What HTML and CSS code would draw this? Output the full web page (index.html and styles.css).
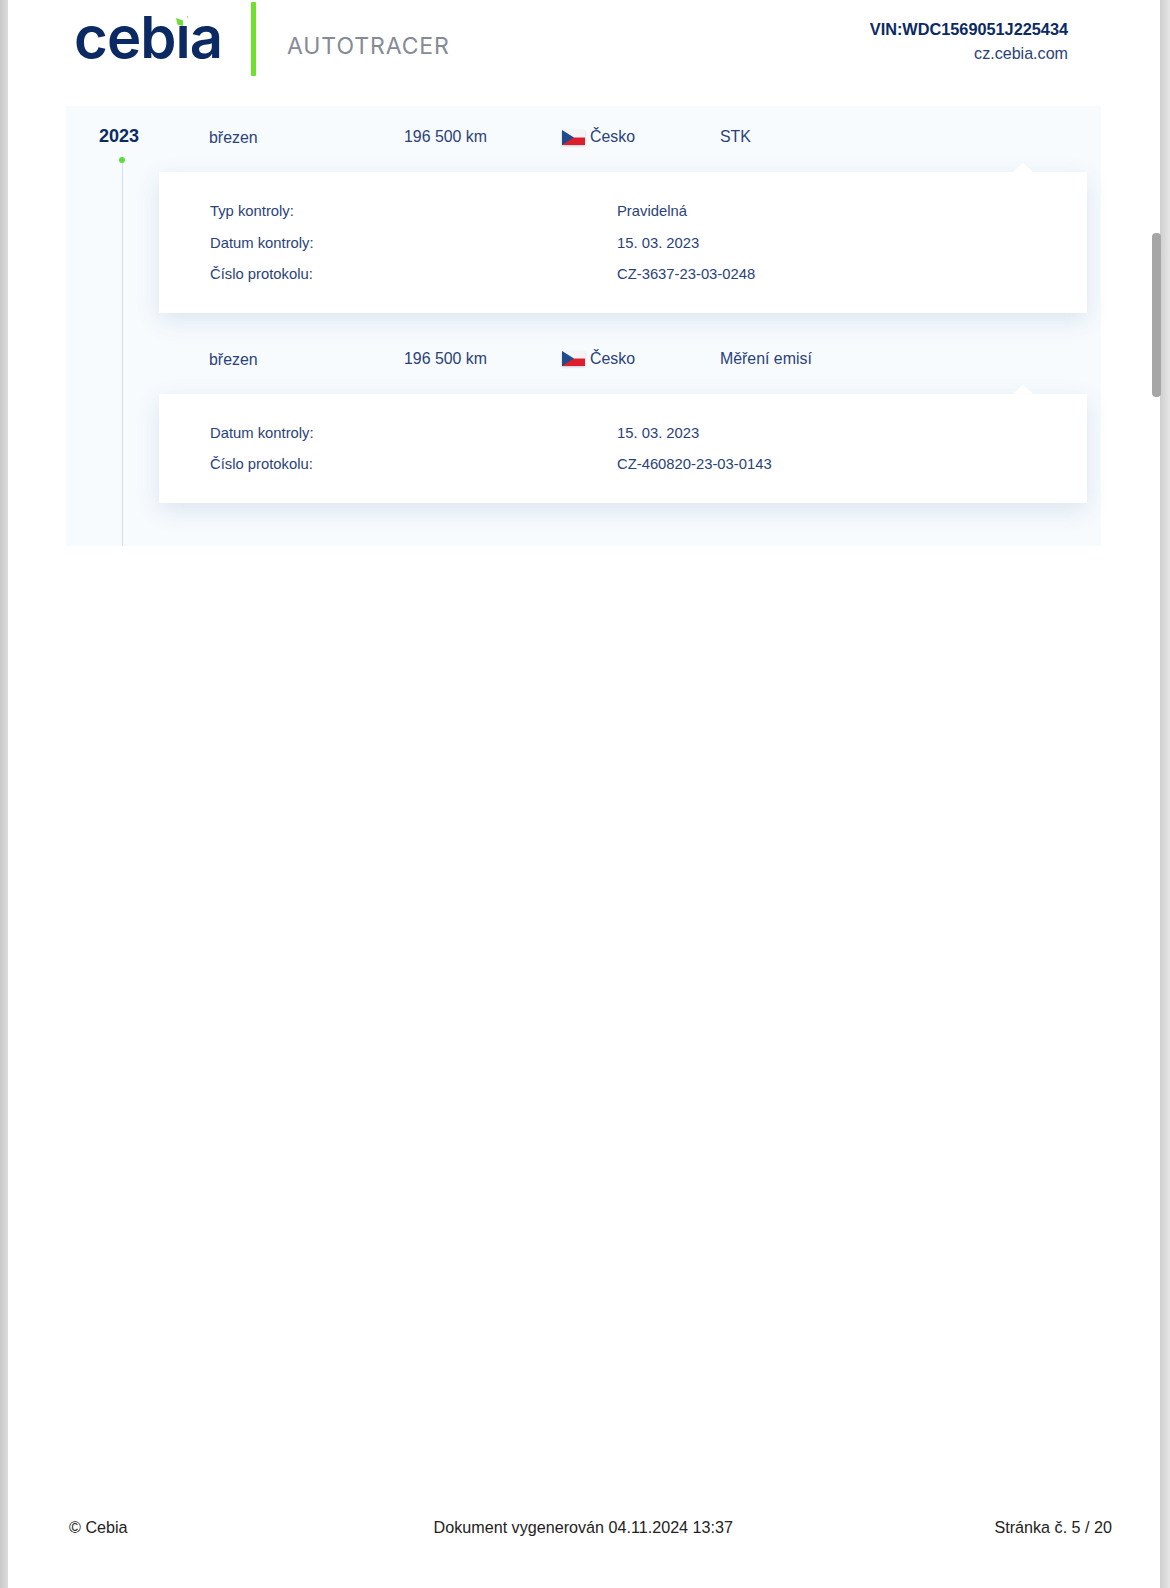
FILE: index.html
```html
<!DOCTYPE html>
<html lang="cs">
<head>
<meta charset="utf-8">
<title>Cebia AutoTracer</title>
<link rel="stylesheet" href="styles.css">
</head>
<body>
<div class="sheet">
  <header class="top">
    <div class="logo"><span class="logo-word">cebia</span><span class="logo-leaf"></span></div>
    <div class="logo-bar"></div>
    <div class="product">AUTOTRACER</div>
    <div class="vin-box">
      <div class="vin">VIN:WDC1569051J225434</div>
      <div class="site">cz.cebia.com</div>
    </div>
  </header>
  <main class="panel">
    <div class="timeline">
      <div class="year">2023</div>
      <div class="dot"></div>
      <div class="line"></div>
    </div>
    <div class="events">
      <div class="event-head">
        <div class="month">březen</div>
        <div>196 500 km</div>
        <div class="country"><svg class="flag" viewBox="0 0 23 15"><rect width="23" height="7.5" fill="#f4f4f6"/><rect y="7.5" width="23" height="7.5" fill="#dc1f2b"/><path d="M0 0L12 7.5L0 15Z" fill="#1f4a8c"/></svg>Česko</div>
        <div>STK</div>
      </div>
      <div class="card">
        <div class="kv"><span>Typ kontroly:</span><span>Pravidelná</span></div>
        <div class="kv"><span>Datum kontroly:</span><span>15. 03. 2023</span></div>
        <div class="kv"><span>Číslo protokolu:</span><span>CZ-3637-23-03-0248</span></div>
      </div>
      <div class="event-head">
        <div class="month">březen</div>
        <div>196 500 km</div>
        <div class="country"><svg class="flag" viewBox="0 0 23 15"><rect width="23" height="7.5" fill="#f4f4f6"/><rect y="7.5" width="23" height="7.5" fill="#dc1f2b"/><path d="M0 0L12 7.5L0 15Z" fill="#1f4a8c"/></svg>Česko</div>
        <div>Měření emisí</div>
      </div>
      <div class="card">
        <div class="kv"><span>Datum kontroly:</span><span>15. 03. 2023</span></div>
        <div class="kv"><span>Číslo protokolu:</span><span>CZ-460820-23-03-0143</span></div>
      </div>
    </div>
  </main>
  <footer class="foot">
    <span>© Cebia</span>
    <span class="foot-mid">Dokument vygenerován 04.11.2024 13:37</span>
    <span class="foot-right">Stránka č. 5 / 20</span>
  </footer>
  <div class="scroll-thumb"></div>
</div>
</body>
</html>
```
FILE: styles.css
```css
* { box-sizing: border-box; }
html, body { margin: 0; height: 100%; }
body {
  width: 1170px;
  height: 1588px;
  overflow: hidden;
  padding: 0 10px 0 8px;
  background: linear-gradient(to right, #c8c8c8 0, #dcdcdc 8px, #fff 8px, #fff 1160px, #cfcfcf 1160px, #e6e6e6 1170px);
  font-family: "Liberation Sans", Arial, sans-serif;
  color: #2a427a;
}
.sheet {
  position: relative;
  height: 1588px;
  background: #fff;
  display: flex;
  flex-direction: column;
}
.top {
  height: 106px;
  flex: none;
  display: flex;
  align-items: flex-start;
}
.logo {
  position: relative;
  margin-left: 66px;
  width: 177px;
  height: 76px;
}
.logo-word {
  font-family: "Inter", sans-serif;
  font-weight: 600;
  font-size: 58px;
  line-height: 74px;
  letter-spacing: -0.9px;
  color: #0b2a63;
  display: block;
}
.logo-leaf {
  position: absolute;
  left: 98px;
  top: 11px;
  width: 15px;
  height: 15px;
  background: #fff;
}
.logo-leaf::after {
  content: "";
  position: absolute;
  left: 4px;
  top: 7px;
  width: 7px;
  height: 8px;
  background: #6fdc3c;
  clip-path: polygon(0 0, 100% 30%, 100% 100%, 20% 80%);
}
.logo-bar {
  width: 5px;
  height: 74px;
  margin-top: 2px;
  background: #6fe02e;
  border-radius: 1px;
}
.product {
  margin: 32px 0 0 31px;
  font-family: "Inter", sans-serif;
  font-weight: 400;
  font-size: 23px;
  line-height: 28px;
  letter-spacing: 0.9px;
  color: #858b94;
}
.vin-box {
  margin: 17px 92px 0 auto;
  text-align: right;
}
.vin {
  font-weight: 700;
  font-size: 16.3px;
  line-height: 24px;
  color: #0b2a63;
}
.site {
  font-size: 16.1px;
  line-height: 24px;
  color: #2a427a;
}
.panel {
  flex: none;
  width: 1035px;
  height: 440px;
  margin-left: 58px;
  background: #f7fbfe;
  display: flex;
}
.timeline {
  width: 93px;
  flex: none;
  display: flex;
  flex-direction: column;
  align-items: flex-start;
}
.year {
  margin: 19px 0 0 33px;
  font-weight: 700;
  font-size: 18px;
  line-height: 22px;
  color: #0b2a63;
}
.dot {
  width: 6px;
  height: 6px;
  margin: 10px 0 0 53px;
  border-radius: 50%;
  background: #5fdc3c;
}
.line {
  flex: 1;
  width: 1px;
  margin-left: 56px;
  background: #cfe3f1;
}
.events {
  width: 928px;
  flex: none;
}
.event-head {
  height: 66px;
  padding: 19px 0 0 50px;
  display: grid;
  grid-template-columns: 195px 158px 158px 1fr;
  font-size: 15.9px;
  line-height: 24px;
}
.month { padding-top: 1px; }
.country {
  display: flex;
  align-items: center;
  height: 24px;
}
.flag {
  width: 23px;
  height: 15px;
  margin-right: 5px;
  box-shadow: 0 1px 2px rgba(30, 50, 90, .25);
}
.card {
  position: relative;
  padding: 24px 0 22px 51px;
  margin-bottom: 15px;
  background: #fff;
  box-shadow: 0 7px 22px rgba(40, 80, 140, .13);
}
.card::before {
  content: "";
  position: absolute;
  right: 54px;
  top: -9px;
  width: 20px;
  height: 9px;
  background: #fff;
  clip-path: polygon(50% 0, 100% 100%, 0 100%);
}
.kv {
  display: grid;
  grid-template-columns: 407px 1fr;
  height: 31.6px;
  font-size: 14.8px;
  line-height: 31.6px;
}
.foot {
  margin-top: auto;
  padding: 0 48px 50px 61px;
  display: flex;
  font-size: 16.15px;
  line-height: 22px;
  color: #222;
}
.foot-mid { margin-left: 306px; }
.foot-right { margin-left: auto; }
.scroll-thumb {
  position: absolute;
  left: 1144px;
  top: 233px;
  width: 9px;
  height: 164px;
  border-radius: 4px;
  background: #a6a6a6;
}
```
